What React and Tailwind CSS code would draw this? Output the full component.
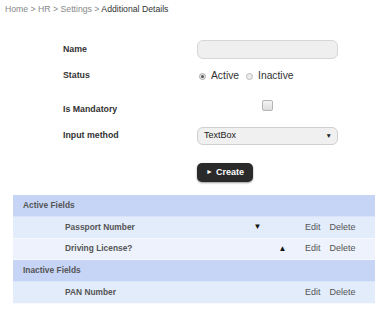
export default function App() {
  const rows = [
    { type: "header", label: "Active Fields" },
    { type: "row", label: "Passport Number", down: true, bg: "bg-[#e3ecfb]" },
    { type: "row", label: "Driving License?", up: true, bg: "bg-[#edf2fc]" },
    { type: "header", label: "Inactive Fields" },
    { type: "row", label: "PAN Number", bg: "bg-[#e3ecfb]" },
  ];
  return (
    <div className="w-[375px] h-[309px] bg-white overflow-hidden font-['Liberation_Sans',Arial,sans-serif]">
      <div className="pl-[5px] pt-[4px] h-[14px] leading-[10px] text-[8.7px] text-[#888]">
        Home &gt; HR &gt; Settings &gt; <span className="text-[#333]">Additional Details</span>
      </div>

      <div className="pl-[63px] flex flex-col">
        <div className="mt-[26px] flex items-center h-[19px]">
          <div className="w-[134px] text-[8.8px] font-bold text-[#333]">Name</div>
          <div className="w-[141px] h-[19px] rounded-[6px] border border-[#d6d6d6] bg-[#efefef]" />
        </div>

        <div className="mt-[7px] flex items-center h-[20px]">
          <div className="w-[134px] text-[8.8px] font-bold text-[#333]">Status</div>
          <div className="flex items-center text-[10.3px] text-[#333]">
            <span className="ml-[2px] w-[7px] h-[7px] rounded-full border border-[#aaa] bg-[#e8e8e8] flex items-center justify-center">
              <span className="w-[3px] h-[3px] rounded-full bg-[#555]" />
            </span>
            <span className="ml-[5px]">Active</span>
            <span className="ml-[7px] w-[7px] h-[7px] rounded-full border border-[#bbb] bg-[#ececec]" />
            <span className="ml-[5px]">Inactive</span>
          </div>
        </div>

        <div className="mt-[10px] flex h-[20px]">
          <div className="w-[134px] pt-[8px] text-[8.8px] leading-[10px] font-bold text-[#333]">Is Mandatory</div>
          <div className="w-[141px] flex justify-center pt-[4px]">
            <span className="w-[11px] h-[11px] rounded-[2px] border border-[#b5b5b5] bg-[linear-gradient(#f4f4f4,#dedede)]" />
          </div>
        </div>

        <div className="mt-[11px] flex items-center h-[18px]">
          <div className="w-[134px] text-[8.8px] font-bold text-[#333]">Input method</div>
          <div className="w-[141px] h-[18px] rounded-[6px] border border-[#cfcfcf] bg-[#f0f0f0] flex items-center justify-between pl-[6px] pr-[5px]">
            <span className="text-[9px] text-[#222]">TextBox</span>
            <span className="text-[6.5px] text-[#222]">▼</span>
          </div>
        </div>

        <div className="mt-[18px] flex h-[19px]">
          <div className="w-[134px]" />
          <div className="w-[56px] h-[19px] rounded-[5px] bg-[#2a2a2a] shadow-[0_1px_2px_rgba(0,0,0,0.4)] flex items-center justify-center text-white text-[9px] font-bold">
            <span className="text-[7px] mr-[3px]">►</span>Create
          </div>
        </div>
      </div>

      <div className="ml-[13px] mt-[13px] flex flex-col">
        {rows.map((r, i) =>
          r.type === "header" ? (
            <div key={i} className="h-[22px] bg-[#c6d5f6] flex items-center pl-[10px] text-[8.4px] font-bold text-[#555] border-b border-[#d9e3f9]">
              {r.label}
            </div>
          ) : (
            <div key={i} className={`h-[21.5px] ${r.bg} flex items-center text-[#555] border-b border-[#f6f9fe]`}>
              <div className="w-[232px] pl-[52px] text-[8.4px] font-bold">{r.label}</div>
              <div className="w-[25px] text-center text-[8px] text-[#111]">{r.down ? "▼" : ""}</div>
              <div className="w-[25px] text-center text-[8px] text-[#111]">{r.up ? "▲" : ""}</div>
              <div className="pl-[10px] text-[9px] flex gap-[9px]">
                <span>Edit</span>
                <span>Delete</span>
              </div>
            </div>
          )
        )}
      </div>
    </div>
  );
}
